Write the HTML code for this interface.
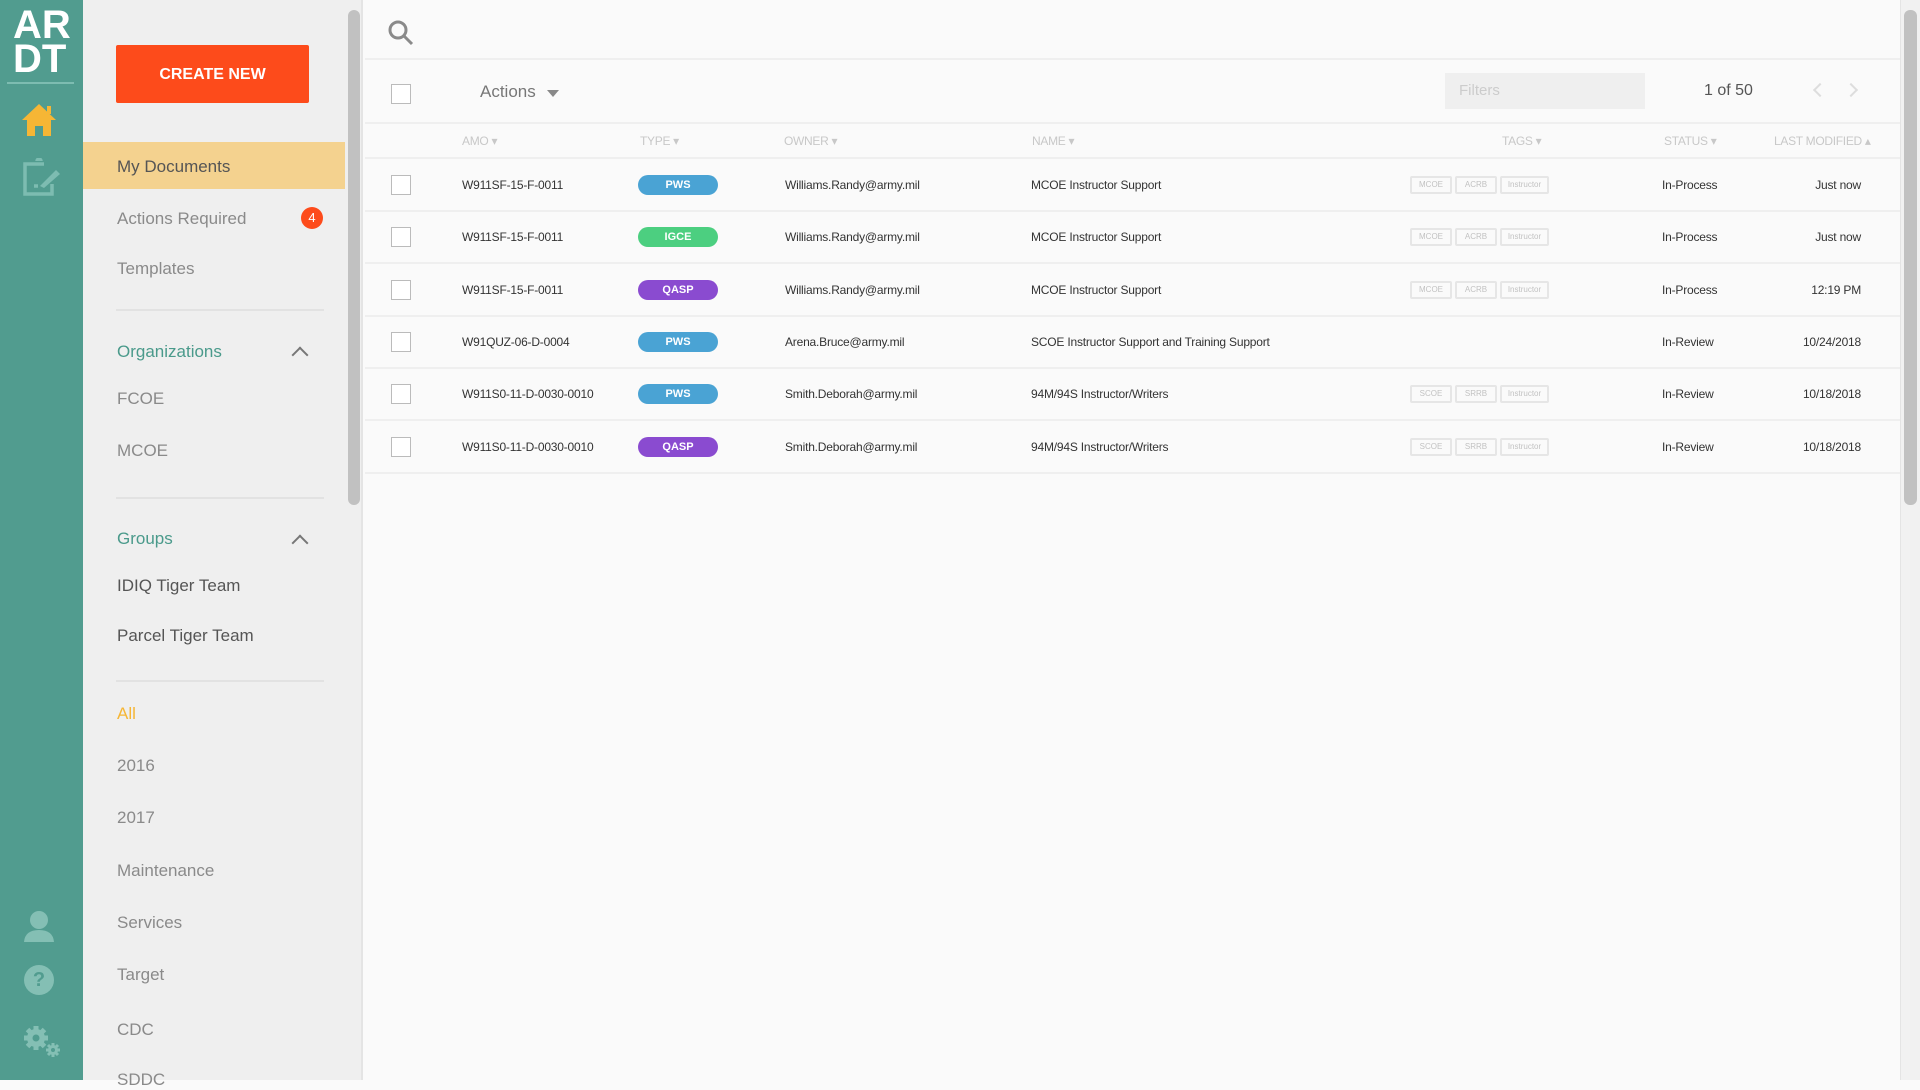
<!DOCTYPE html>
<html><head><meta charset="utf-8"><style>
*{margin:0;padding:0;box-sizing:border-box}
body{width:1920px;height:1080px;overflow:hidden;background:#fafafa;font-family:"Liberation Sans",sans-serif;position:relative}
.a{position:absolute}
.rail{left:0;top:0;width:83px;height:1080px;background:#519c8f}
.side{left:83px;top:0;width:262px;height:1080px;background:#efefef}
.si{position:absolute;left:117px;font-size:17px;color:#8a8a8a;white-space:nowrap}
.sh{color:#4a9a8b}
.div{position:absolute;left:116px;width:208px;height:2px;background:#e2e2e2}
.chev{position:absolute;left:294px;width:12px;height:12px;border-left:2px solid #777;border-top:2px solid #777;transform:rotate(45deg)}
.td{position:absolute;font-size:12px;color:#333;white-space:nowrap;letter-spacing:-0.2px}
.hd{position:absolute;top:134px;font-size:12px;color:#c8c8c8;white-space:nowrap;letter-spacing:-0.3px}
.cb{position:absolute;left:391px;width:20px;height:20px;border:1px solid #bbb;background:#fff}
.pill{position:absolute;left:638px;width:80px;height:20px;border-radius:10px;color:#fff;font-size:11px;font-weight:bold;text-align:center;line-height:20px}
.tag{position:absolute;height:18px;border:2px solid #e6e6e6;border-radius:2px;font-size:8px;color:#c2c2c2;text-align:center;line-height:14px}
.line{position:absolute;left:365px;width:1535px;height:2px;background:#efefef}
</style></head><body>
<div class="a rail"></div>
<div class="a" style="left:13px;top:8px;width:60px;font-size:40px;font-weight:bold;color:#fff;line-height:34px;letter-spacing:0px">AR<br>DT</div>
<div class="a" style="left:7px;top:82px;width:67px;height:2px;background:#7dbcb1"></div>
<svg class="a" style="left:20px;top:102px" width="38" height="36" viewBox="0 0 38 36"><path d="M19 2 L36 18 L31 18 L31 34 L23 34 L23 24 L15 24 L15 34 L7 34 L7 18 L2 18 Z" fill="#f6b635"/><rect x="27" y="4" width="4" height="8" fill="#f6b635"/></svg>
<svg class="a" style="left:22px;top:158px" width="40" height="38" viewBox="0 0 40 38" fill="none" stroke="#7dbcb1" stroke-width="3.5"><path d="M12 6 H3 V36 H30 V26"/><path d="M12 6 H22 M15 3 a2 2 0 0 1 4 0"/><path d="M12 28 H16" /><path d="M18 28 L34 12 L38 16 L22 30 Z" fill="#7dbcb1" stroke="none"/></svg>
<svg class="a" style="left:23px;top:910px" width="32" height="32" viewBox="0 0 32 32"><circle cx="16" cy="10" r="9" fill="#84bfb4"/><path d="M1 32 Q2 20 16 20 Q30 20 31 32 Z" fill="#84bfb4"/></svg>
<div class="a" style="left:24px;top:965px;width:30px;height:30px;border-radius:50%;background:#84bfb4;color:#519c8f;font-weight:bold;font-size:20px;text-align:center;line-height:30px">?</div>
<svg class="a" style="left:22px;top:1026px" width="40" height="32" viewBox="0 0 40 32"><g fill="#84bfb4"><circle cx="14" cy="12" r="9"/><g stroke="#84bfb4" stroke-width="5"><path d="M14 0V24M2 12H26M5.5 3.5L22.5 20.5M22.5 3.5L5.5 20.5"/></g><circle cx="31" cy="24" r="5"/><g stroke="#84bfb4" stroke-width="3"><path d="M31 17V31M24 24H38M26 19L36 29M36 19L26 29"/></g></g><circle cx="14" cy="12" r="3.5" fill="#519c8f"/><circle cx="31" cy="24" r="2" fill="#519c8f"/></svg>

<div class="a side"></div>
<div class="a" style="left:116px;top:45px;width:193px;height:58px;background:#fd4b1b;border-radius:2px;color:#fff;font-size:16px;font-weight:bold;text-align:center;line-height:60px">CREATE NEW</div>
<div class="a" style="left:83px;top:142px;width:262px;height:47px;background:#f4d28f"></div>
<div class="si" style="top:157px;color:#555">My Documents</div>
<div class="si" style="top:209px">Actions Required</div>
<div class="a" style="left:301px;top:207px;width:22px;height:22px;border-radius:50%;background:#fd4b1b;color:#fff;font-size:13px;text-align:center;line-height:22px">4</div>
<div class="si" style="top:259px">Templates</div>
<div class="div" style="top:309px"></div>
<div class="si sh" style="top:342px">Organizations</div><div class="chev" style="top:349px"></div>
<div class="si" style="top:389px">FCOE</div>
<div class="si" style="top:441px">MCOE</div>
<div class="div" style="top:497px"></div>
<div class="si sh" style="top:529px">Groups</div><div class="chev" style="top:537px"></div>
<div class="si" style="top:576px;color:#555">IDIQ Tiger Team</div>
<div class="si" style="top:626px;color:#555">Parcel Tiger Team</div>
<div class="div" style="top:680px"></div>
<div class="si" style="top:704px;color:#f6b635">All</div>
<div class="si" style="top:756px">2016</div>
<div class="si" style="top:808px">2017</div>
<div class="si" style="top:861px">Maintenance</div>
<div class="si" style="top:913px">Services</div>
<div class="si" style="top:965px">Target</div>
<div class="si" style="top:1020px">CDC</div>
<div class="si" style="top:1070px">SDDC</div>
<div class="a" style="left:345px;top:0;width:18px;height:1080px;background:#efefef;border-right:2px solid #e4e4e4"></div>
<div class="a" style="left:348px;top:10px;width:12px;height:495px;border-radius:6px;background:#c1c1c1"></div>

<svg class="a" style="left:388px;top:20px" width="26" height="26" viewBox="0 0 26 26" fill="none" stroke="#8a8a8a" stroke-width="3"><circle cx="10" cy="10" r="8"/><path d="M16 16L24 24"/></svg>
<div class="line" style="top:58px"></div>
<div class="cb" style="top:84px"></div>
<div class="a" style="left:480px;top:82px;font-size:17px;color:#777">Actions</div>
<div class="a" style="left:547px;top:90px;border-left:6px solid transparent;border-right:6px solid transparent;border-top:7px solid #888"></div>
<div class="a" style="left:1445px;top:73px;width:200px;height:36px;background:#efefef;color:#ccc;font-size:15px;line-height:36px;padding-left:14px">Filters</div>
<div class="a" style="left:1704px;top:82px;font-size:16px;color:#555">1 of 50</div>
<div class="a" style="left:1815px;top:85px;width:10px;height:10px;border-left:2px solid #ddd;border-bottom:2px solid #ddd;transform:rotate(45deg)"></div>
<div class="a" style="left:1846px;top:85px;width:10px;height:10px;border-right:2px solid #ddd;border-top:2px solid #ddd;transform:rotate(45deg)"></div>
<div class="line" style="top:122px"></div>
<div class="hd" style="left:462px">AMO ▾</div>
<div class="hd" style="left:640px">TYPE ▾</div>
<div class="hd" style="left:784px">OWNER ▾</div>
<div class="hd" style="left:1032px">NAME ▾</div>
<div class="hd" style="left:1502px">TAGS ▾</div>
<div class="hd" style="left:1664px">STATUS ▾</div>
<div class="hd" style="left:1774px">LAST MODIFIED ▴</div>
<div class="line" style="top:157px"></div>

<div id="rows"></div>
<script>
var R=[["W911SF-15-F-0011","PWS","#4aa3d4","Williams.Randy@army.mil","MCOE Instructor Support",["MCOE","ACRB"],"In-Process","Just now"],
["W911SF-15-F-0011","IGCE","#4ccf80","Williams.Randy@army.mil","MCOE Instructor Support",["MCOE","ACRB"],"In-Process","Just now"],
["W911SF-15-F-0011","QASP","#8a4bd0","Williams.Randy@army.mil","MCOE Instructor Support",["MCOE","ACRB"],"In-Process","12:19 PM"],
["W91QUZ-06-D-0004","PWS","#4aa3d4","Arena.Bruce@army.mil","SCOE Instructor Support and Training Support",null,"In-Review","10/24/2018"],
["W911S0-11-D-0030-0010","PWS","#4aa3d4","Smith.Deborah@army.mil","94M/94S Instructor/Writers",["SCOE","SRRB"],"In-Review","10/18/2018"],
["W911S0-11-D-0030-0010","QASP","#8a4bd0","Smith.Deborah@army.mil","94M/94S Instructor/Writers",["SCOE","SRRB"],"In-Review","10/18/2018"]];
var h="";R.forEach(function(r,i){var t=158+i*52.3,c=t+27;
h+='<div class="cb" style="top:'+(c-10)+'px"></div>';
h+='<div class="td" style="left:462px;top:'+(c-7)+'px">'+r[0]+'</div>';
h+='<div class="pill" style="top:'+(c-10)+'px;background:'+r[2]+'">'+r[1]+'</div>';
h+='<div class="td" style="left:785px;top:'+(c-7)+'px">'+r[3]+'</div>';
h+='<div class="td" style="left:1031px;top:'+(c-7)+'px">'+r[4]+'</div>';
if(r[5]){h+='<div class="tag" style="left:1410px;width:42px;top:'+(c-9)+'px">'+r[5][0]+'</div><div class="tag" style="left:1455px;width:42px;top:'+(c-9)+'px">'+r[5][1]+'</div><div class="tag" style="left:1500px;width:49px;top:'+(c-9)+'px">Instructor</div>';}
h+='<div class="td" style="left:1662px;top:'+(c-7)+'px">'+r[6]+'</div>';
h+='<div class="td" style="right:'+(1920-1861)+'px;top:'+(c-7)+'px">'+r[7]+'</div>';
h+='<div class="line" style="top:'+(t+52)+'px"></div>';});
document.getElementById("rows").innerHTML=h;
</script>
<div class="a" style="left:1900px;top:0;width:20px;height:1080px;background:#f1f1f1;border-left:1px solid #e4e4e4"></div>
<div class="a" style="left:1904px;top:10px;width:13px;height:495px;border-radius:6px;background:#c1c1c1"></div>
</body></html>
